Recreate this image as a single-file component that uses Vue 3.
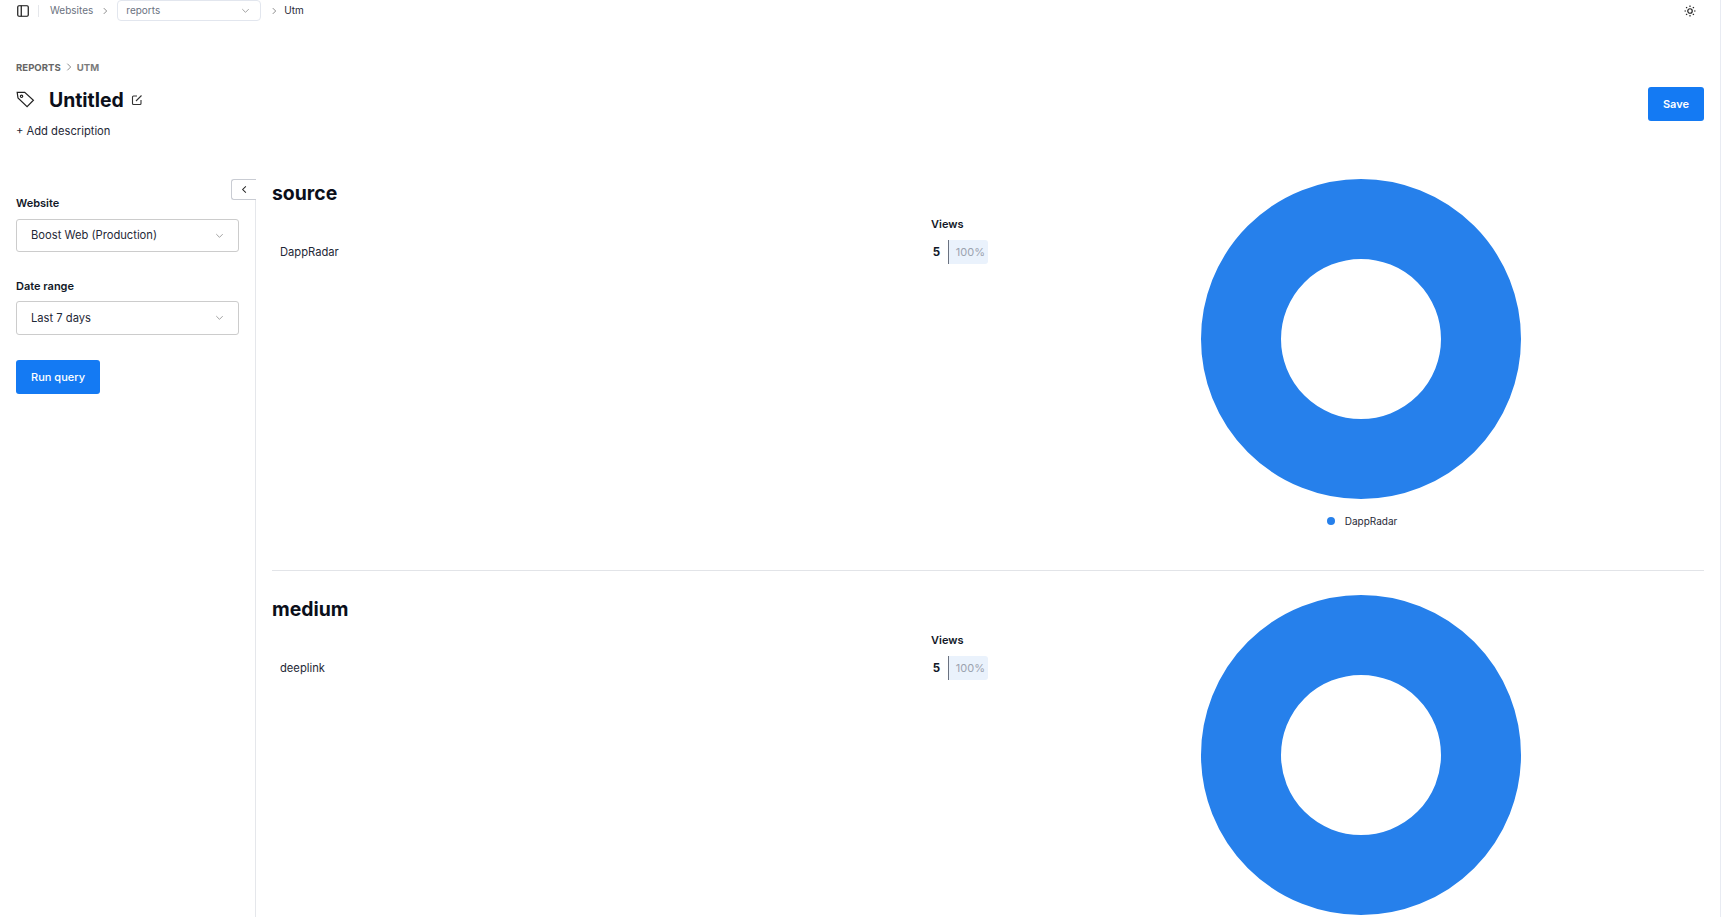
<script setup>
const sections = [
  { title: 'source', label: 'DappRadar', legend: true },
  { title: 'medium', label: 'deeplink', legend: false },
]
</script>

<template>
  <div class="app">
    <header class="topbar">
      <div class="crumbs">
        <svg class="panel" width="14" height="14" viewBox="0 0 24 24" fill="none" stroke="#111" stroke-width="2"><rect x="3" y="3" width="18" height="18" rx="2"/><path d="M9 3v18"/></svg>
        <span class="vr"></span>
        <span class="muted">Websites</span>
        <svg class="chev" width="10" height="10" viewBox="0 0 24 24" fill="none" stroke="#777" stroke-width="2"><path d="m9 5 7 7-7 7"/></svg>
        <div class="crumb-select">
          <span>reports</span>
          <svg width="11" height="11" viewBox="0 0 24 24" fill="none" stroke="#999" stroke-width="2"><path d="m5 9 7 7 7-7"/></svg>
        </div>
        <svg class="chev" width="10" height="10" viewBox="0 0 24 24" fill="none" stroke="#777" stroke-width="2"><path d="m9 5 7 7-7 7"/></svg>
        <span class="current">Utm</span>
      </div>
      <svg class="sun" width="12" height="12" viewBox="0 0 24 24" fill="none" stroke="#222" stroke-width="2.4"><circle cx="12" cy="12" r="4.5"/><path d="M12 1v3M12 20v3M1 12h3M20 12h3M4.2 4.2l2.1 2.1M17.7 17.7l2.1 2.1M4.2 19.8l2.1-2.1M17.7 6.3l2.1-2.1"/></svg>
    </header>

    <section class="head">
      <div class="head-left">
        <div class="trail">REPORTS <svg width="10" height="10" viewBox="0 0 24 24" fill="none" stroke="#777" stroke-width="2"><path d="m8 4 8 8-8 8"/></svg> <span class="trail-last">UTM</span></div>
        <div class="title-row">
          <svg class="tag" width="19" height="19" viewBox="0 0 24 24" fill="none" stroke="#222" stroke-width="1.5"><path d="M1.5 3 2.5 10 14 21l8-8L11 3Z"/><circle cx="7" cy="8" r="1.5"/></svg>
          <h1>Untitled</h1>
          <svg class="edit" width="12" height="12" viewBox="0 0 24 24" fill="none" stroke="#333" stroke-width="2.2"><path d="M12 4H5a2 2 0 0 0-2 2v13a2 2 0 0 0 2 2h13a2 2 0 0 0 2-2v-7"/><path d="M10 14 21 3"/></svg>
        </div>
        <div class="desc">+ Add description</div>
      </div>
      <button class="primary save">Save</button>
    </section>

    <div class="body">
      <aside class="side">
        <button class="collapse">
          <svg width="11" height="11" viewBox="0 0 24 24" fill="none" stroke="#222" stroke-width="2.2"><path d="m15 5-7 7 7 7"/></svg>
        </button>
        <label class="field-label first">Website</label>
        <div class="select s1"><span>Boost Web (Production)</span><svg width="11" height="11" viewBox="0 0 24 24" fill="none" stroke="#999" stroke-width="2"><path d="m5 9 7 7 7-7"/></svg></div>
        <label class="field-label second">Date range</label>
        <div class="select s2"><span>Last 7 days</span><svg width="11" height="11" viewBox="0 0 24 24" fill="none" stroke="#999" stroke-width="2"><path d="m5 9 7 7 7-7"/></svg></div>
        <button class="primary run">Run query</button>
      </aside>

      <main class="main">
        <article v-for="s in sections" :key="s.title" class="report" :class="{ ruled: s.legend }">
          <div class="left">
            <h2>{{ s.title }}</h2>
            <div class="views-head">Views</div>
            <div class="row">
              <span class="name">{{ s.label }}</span>
              <span class="num">5</span>
              <span class="pct">100%</span>
            </div>
          </div>
          <div class="right">
            <svg class="donut" width="320" height="320" viewBox="0 0 320 320"><circle cx="160" cy="160" r="120" fill="none" stroke="#2680eb" stroke-width="80"/></svg>
            <div v-if="s.legend" class="legend"><i></i>{{ s.label }}</div>
          </div>
        </article>
      </main>
    </div>
  </div>
</template>

<style>
html, body { margin: 0; overflow: hidden; background: #fff; }
</style>

<style scoped>
.app {
  width: 1727px;
  height: 917px;
  box-sizing: border-box;
  overflow: hidden;
  font-family: Inter, "Liberation Sans", sans-serif;
  color: #111827;
  font-size: 12px;
  background: linear-gradient(to right, #fff 1720px, #e8ebf2 1720px, #e8ebf2 1721px, #fff 1721px);
}
.topbar { height: 21px; display: flex; justify-content: space-between; align-items: center; padding: 0 24px 0 16px; width: 1720px; box-sizing: border-box; }
.crumbs { display: flex; align-items: center; }
.panel { margin-right: 8px; }
.vr { width: 1px; height: 12px; background: #e5e7eb; margin-right: 11px; }
.muted { color: #6b7280; font-size: 10px; position: relative; top: -0.5px; }
.chev { margin: 0 7px; }
.crumb-select { box-sizing: border-box; width: 144px; height: 21px; border: 1px solid #e2e6ee; border-radius: 4px; display: flex; align-items: center; justify-content: space-between; padding: 0 9px 1px 8px; color: #6b7280; font-size: 10px; }
.crumb-select + .chev { margin: 0 5px 0 8px; }
.current { font-size: 10px; color: #1f2937; position: relative; top: -0.5px; }
.head { display: flex; justify-content: space-between; width: 1720px; box-sizing: border-box; padding: 39px 16px 0; height: 134px; }
.trail { font-size: 9.6px; font-weight: 700; color: #666; display: flex; align-items: center; gap: 3px; height: 14px; }
.trail-last { color: #7b7b7b; }
.title-row { display: flex; align-items: center; margin-top: 13px; height: 26px; }
.tag { margin-right: 14px; margin-top: -1px; }
h1 { margin: 0; font-size: 19.4px; font-weight: 700; line-height: 25px; color: #0b0f1a; }
.edit { margin-left: 7px; margin-top: -1px; }
.desc { margin-top: 11px; font-size: 11.2px; color: #1f2937; }
.primary { border: 0; border-radius: 3px; background: #147af3; color: #fff; font: 600 11px Inter, "Liberation Sans", sans-serif; }
.save { width: 56px; height: 34px; margin-top: 27px; }
.body { display: flex; width: 1720px; height: 762px; }
.side { position: relative; width: 256px; box-sizing: border-box; border-right: 1px solid #e5e7eb; padding: 0 16px; flex: none; margin-top: 24px; height: 738px; }
.collapse { position: absolute; left: 231px; top: 0; width: 25px; height: 21px; padding: 0; background: #fff; border: 1px solid #c9ccd3; border-right: 0; border-radius: 3px 0 0 3px; display: flex; align-items: center; justify-content: center; }
.field-label { display: block; font-size: 11px; font-weight: 600; color: #111827; }
.first { margin-top: 17px; }
.second { margin-top: 27px; }
.select { box-sizing: border-box; width: 223px; border: 1px solid #ccc; border-radius: 3px; display: flex; align-items: center; justify-content: space-between; padding: 0 14px 1px; font-size: 11.2px; color: #1f2937; margin-top: 9px; }
.select svg { margin-right: -1px; }
.s1 { height: 33px; }
.s2 { height: 34px; margin-top: 8px; }
.run { width: 84px; height: 34px; margin-top: 25px; display: block; font-weight: 500; }
.main { flex: 1; padding: 0 16px; min-width: 0; }
.report { display: grid; grid-template-columns: 716px 686px; column-gap: 30px; height: 415px; }
.ruled { border-bottom: 1px solid #e2e4e8; }
.left { padding-top: 25px; }
h2 { margin: 0; font-size: 19.4px; font-weight: 700; line-height: 26px; color: #0b0f1a; }
.views-head { margin: 11px 0 0 659px; font-size: 11px; font-weight: 600; }
.row { display: flex; align-items: center; height: 24px; margin-top: 9px; padding-left: 8px; }
.name { width: 645px; font-size: 11.2px; color: #1f2937; }
.num { width: 30px; font-size: 11.5px; font-weight: 700; text-align: right; padding-right: 8px; box-sizing: border-box; margin-left: -5px; }
.pct { width: 40px; height: 24px; box-sizing: border-box; border-left: 1px solid #6b7280; background: #eaf2fc; color: #9ca3af; font-size: 11px; line-height: 24px; text-align: right; padding-right: 3px; border-radius: 0 3px 3px 0; }
.right { display: flex; flex-direction: column; align-items: center; padding-top: 24px; }
.donut { display: block; flex: none; }
.legend { margin-top: 16px; display: flex; align-items: center; font-size: 10px; color: #1f2937; padding-left: 2px; }
.legend i { width: 8px; height: 8px; border-radius: 50%; background: #2680eb; margin-right: 10px; }
</style>
